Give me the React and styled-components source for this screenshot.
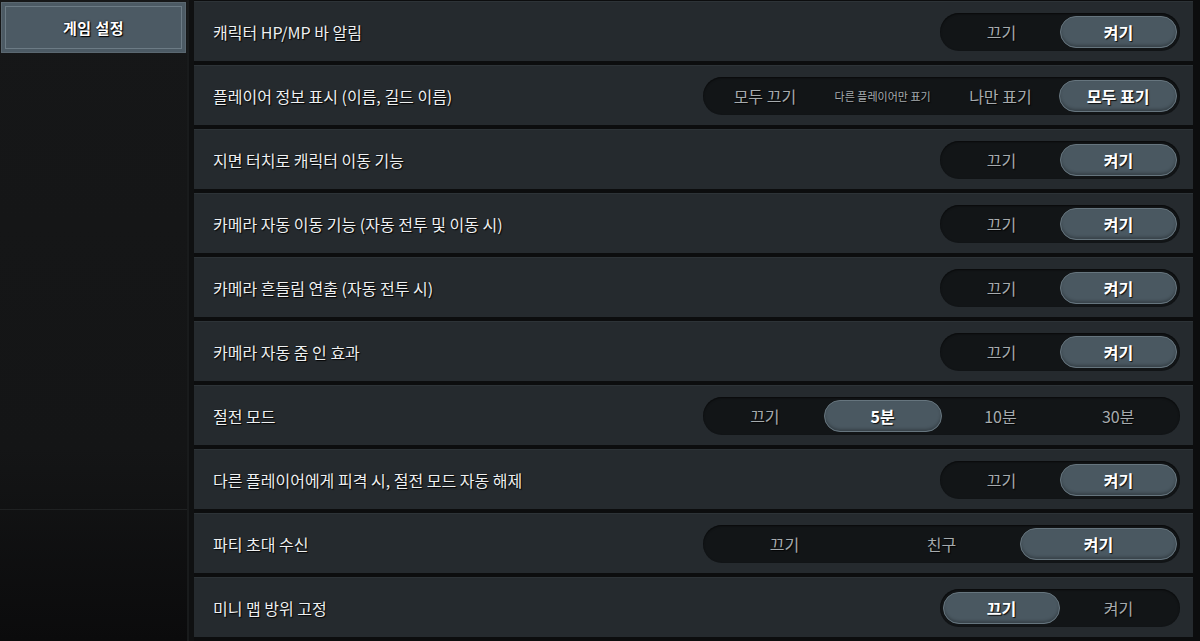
import React from 'react';
import styled, { createGlobalStyle } from 'styled-components';

const GlobalStyle = createGlobalStyle`
  html, body {
    margin: 0;
    padding: 0;
    background: #0c0d0e;
  }
  body {
    font-family: "Noto Sans CJK KR", "Noto Sans", sans-serif;
    color: #e6e8ea;
  }
`;

const Page = styled.div`
  display: flex;
  width: 1200px;
  height: 641px;
  overflow: hidden;
  background: #0c0d0e;
`;

const Sidebar = styled.aside`
  width: 187px;
  flex-shrink: 0;
  display: flex;
  flex-direction: column;
  background: linear-gradient(180deg, #161718 0%, #141516 70%, #0b0b0c 100%);
`;

const SideTab = styled.div`
  margin: 2px 1px 0 1px;
  height: 49px;
  display: flex;
  align-items: center;
  justify-content: center;
  background: #4c5a64;
  border: 1px solid #5a6770;
  box-shadow: inset 0 0 0 3px #4c5a64, inset 0 0 0 4px #6c7b85;
  color: #ffffff;
  font-size: 15px;
  font-weight: 700;
  letter-spacing: 0.5px;
  text-shadow: 1px 1px 1px #000, 0 0 2px rgba(0, 0, 0, 0.8);
`;

const SideSpacer = styled.div`
  flex: 1;
  border-bottom: 1px solid #1f2122;
  max-height: 456px;
`;

const Gutter = styled.div`
  width: 7px;
  flex-shrink: 0;
  background: #0f1011;
  border-left: 2px solid #191b1c;
  box-sizing: border-box;
`;

const List = styled.div`
  width: 999px;
  display: flex;
  flex-direction: column;
  gap: 4px;
  padding-top: 1px;
`;

const Row = styled.div`
  height: 59px;
  display: flex;
  align-items: center;
  justify-content: space-between;
  padding: 0 13px 0 19px;
  background: #252a2e;
  border-top: 1px solid #2d3337;
`;

const Label = styled.span`
  font-size: 16px;
  font-weight: 400;
  color: #eef0f1;
  text-shadow: 1px 1px 1px rgba(0, 0, 0, 0.9), 0 0 1px rgba(0, 0, 0, 0.6);
`;

const Segment = styled.div`
  display: grid;
  grid-template-columns: repeat(${(p) => p.$count}, 1fr);
  width: ${(p) => (p.$wide ? 477 : 240)}px;
  height: 38px;
  box-sizing: border-box;
  padding: 3px;
  border-radius: 19px;
  background: #121517;
  box-shadow: inset 0 1px 2px rgba(0, 0, 0, 0.6);
`;

const Option = styled.div`
  display: flex;
  align-items: center;
  justify-content: center;
  border-radius: 16px;
  box-sizing: border-box;
  font-size: ${(p) => (p.$small ? 11 : 16)}px;
  white-space: nowrap;
  color: ${(p) => (p.$active ? '#ffffff' : '#a6abae')};
  font-weight: ${(p) => (p.$active ? 700 : 400)};
  text-shadow: 1px 1px 1px rgba(0, 0, 0, 0.85);
  background: ${(p) => (p.$active ? '#4a5861' : 'transparent')};
  border: 1px solid ${(p) => (p.$active ? '#66757e' : 'transparent')};
  box-shadow: ${(p) => (p.$active ? 'inset 0 -2px 3px rgba(0,0,0,0.25)' : 'none')};
`;

const OFF_ON = ['끄기', '켜기'];

const rows = [
  { label: '캐릭터 HP/MP 바 알림', options: OFF_ON, selected: 1 },
  {
    label: '플레이어 정보 표시 (이름, 길드 이름)',
    options: ['모두 끄기', '다른 플레이어만 표기', '나만 표기', '모두 표기'],
    small: [1],
    selected: 3,
  },
  { label: '지면 터치로 캐릭터 이동 기능', options: OFF_ON, selected: 1 },
  { label: '카메라 자동 이동 기능 (자동 전투 및 이동 시)', options: OFF_ON, selected: 1 },
  { label: '카메라 흔들림 연출 (자동 전투 시)', options: OFF_ON, selected: 1 },
  { label: '카메라 자동 줌 인 효과', options: OFF_ON, selected: 1 },
  { label: '절전 모드', options: ['끄기', '5분', '10분', '30분'], selected: 1 },
  { label: '다른 플레이어에게 피격 시, 절전 모드 자동 해제', options: OFF_ON, selected: 1 },
  { label: '파티 초대 수신', options: ['끄기', '친구', '켜기'], selected: 2 },
  { label: '미니 맵 방위 고정', options: OFF_ON, selected: 0 },
];

const SettingRow = ({ label, options, selected, small = [] }) => (
  <Row>
    <Label>{label}</Label>
    <Segment $count={options.length} $wide={options.length > 2}>
      {options.map((opt, i) => (
        <Option key={opt} $active={i === selected} $small={small.includes(i)}>
          {opt}
        </Option>
      ))}
    </Segment>
  </Row>
);

const App = () => {
  return (
    <>
      <GlobalStyle />
      <Page>
        <Sidebar>
          <SideTab>게임 설정</SideTab>
          <SideSpacer />
        </Sidebar>
        <Gutter />
        <List>
          {rows.map((r) => (
            <SettingRow key={r.label} {...r} />
          ))}
        </List>
      </Page>
    </>
  );
};

export default App;
